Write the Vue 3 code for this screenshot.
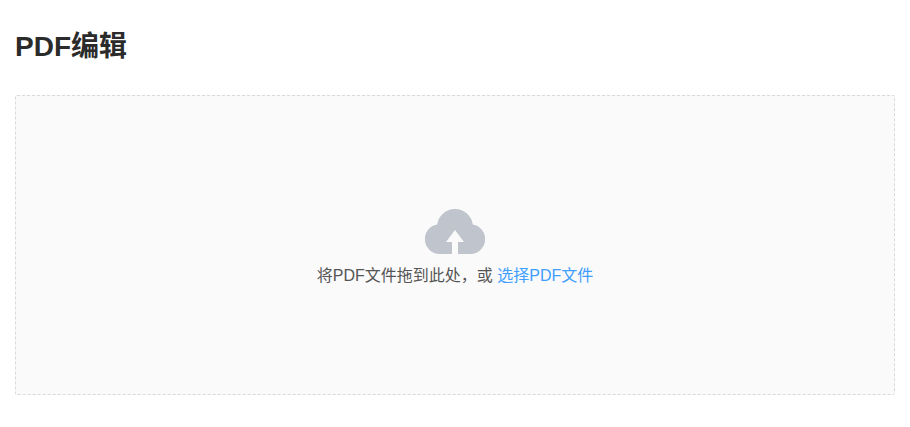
<template>
  <div class="page">
    <h1 class="page-title">PDF编辑</h1>
    <div class="upload-box">
      <svg class="upload-icon" viewBox="0 0 60 46" aria-hidden="true">
        <path d="M14.5 45A14.8 14.8 0 0 1 12.16 15.6A18 18 0 0 1 47.84 15.6A14.8 14.8 0 0 1 45.5 45H33V33H39L30 21L21 33H27V45Z" />
      </svg>
      <div class="upload-text">将PDF文件拖到此处，或 <em>选择PDF文件</em></div>
    </div>
  </div>
</template>

<script setup>
</script>

<style scoped>
.page {
  padding: 15px;
  font-family: "Liberation Sans", "Noto Sans CJK SC", sans-serif;
}

.page-title {
  margin: 0 0 16px;
  font-size: 28px;
  line-height: 64px;
  font-weight: 700;
  color: #2b2b2b;
}

.upload-box {
  box-sizing: border-box;
  height: 300px;
  padding-top: 7px;
  display: flex;
  flex-direction: column;
  align-items: center;
  justify-content: center;
  background-color: #fafafa;
  border: 1px dashed #d9d9d9;
  border-radius: 2px;
}

.upload-icon {
  width: 60px;
  height: 46px;
  fill: #c0c4cc;
}

.upload-text {
  font-size: 16px;
  line-height: 24px;
  color: #555;
  margin-top: 9px;
}

.upload-text em {
  font-style: normal;
  color: #409eff;
}
</style>

<style>
html, body {
  background: #fff;
}
</style>
